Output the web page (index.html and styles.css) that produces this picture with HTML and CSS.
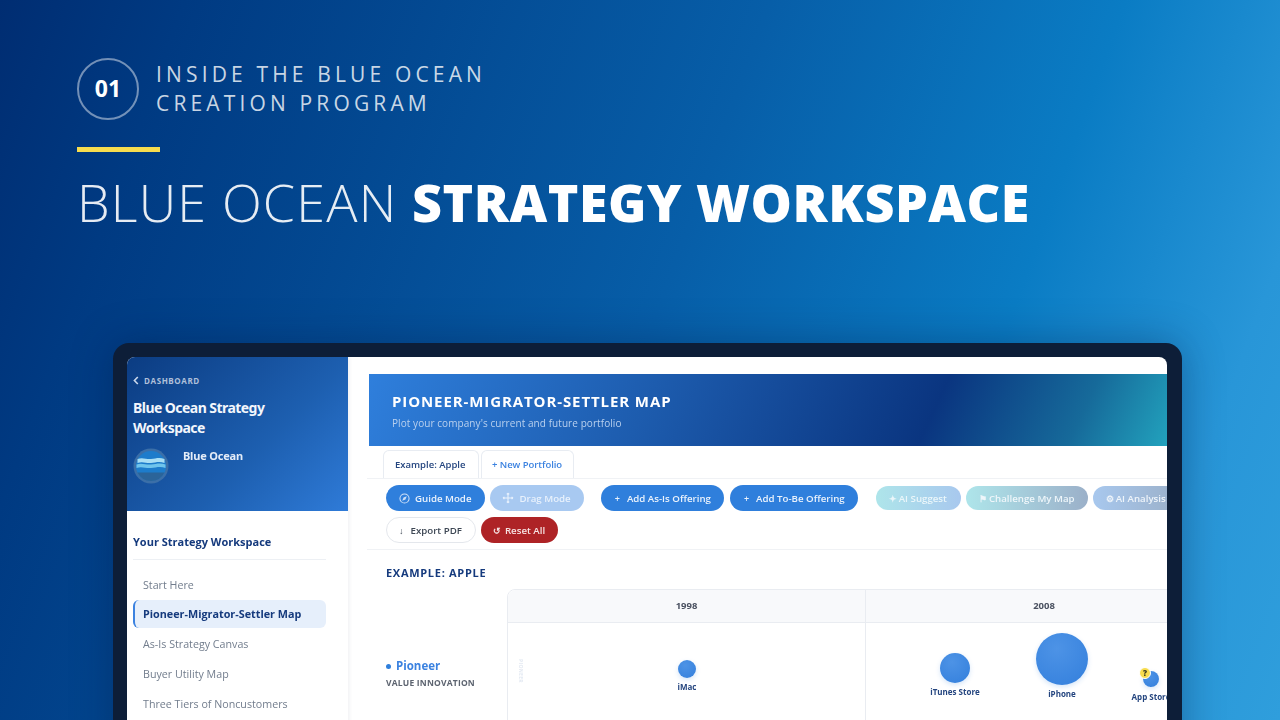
FILE: index.html
```html
<!DOCTYPE html>
<html lang="en">
    <head>
        <meta charset="UTF-8">
        <title>Blue Ocean Strategy Workspace</title>
        <link rel="stylesheet" href="styles.css">
    </head>
    <body>
        <div class="slide">
            <div class="kicker">
                <div class="kicker-num">01</div>
                <div class="kicker-text">INSIDE THE BLUE OCEAN<br>CREATION PROGRAM</div>
            </div>
            <div class="accent"></div>
            <h1 class="headline">BLUE OCEAN <b>STRATEGY WORKSPACE</b></h1>

            <div class="device">
                <div class="app">
                    <div class="sidebar">
                        <div class="side-head">
                            <div class="back">
                                <svg width="6" height="9" viewBox="0 0 6 9"><path d="M4.800 1 1.400 4.500l3.400 3.500" fill="none" stroke="#c9d6ea" stroke-width="1.600"/></svg>
                                DASHBOARD
                            </div>
                            <div class="side-title">Blue Ocean Strategy<br>Workspace</div>
                            <div class="brand">
                                <svg class="brand-logo" width="36" height="36" viewBox="0 0 36 36">
                                    <circle cx="18" cy="18" r="17.500" fill="#3b6fa8"/>
                                    <circle cx="18" cy="18" r="15" fill="#1d7ccb"/>
                                    <path d="M4.500 24.500h27a15 15 0 0 1-27 0z" fill="#2b6499"/>
                                    <path d="M4.500 11c5-2 9 .5 13.500 0s8.500-2 13.500 0v4c-5-2-9-.5-13.500 0s-8.500-2-13.500 0z" fill="#a8def4"/>
                                    <path d="M3.500 16.500c5-2 9.500.5 14.500 0s9.500-2 14.500 0v3.500c-5-2-9.500-.5-14.500 0s-9.500-2-14.500 0z" fill="#6fc4ec"/>
                                </svg>
                                <div class="brand-name">Blue Ocean</div>
                            </div>
                        </div>
                        <div class="side-nav">
                            <div class="nav-title">Your Strategy Workspace</div>
                            <div class="nav-item">Start Here</div>
                            <div class="nav-item nav-active">Pioneer-Migrator-Settler Map</div>
                            <div class="nav-item">As-Is Strategy Canvas</div>
                            <div class="nav-item">Buyer Utility Map</div>
                            <div class="nav-item">Three Tiers of Noncustomers</div>
                        </div>
                    </div>
                    <div class="main">
                        <div class="hero">
                            <div class="hero-title">PIONEER-MIGRATOR-SETTLER MAP</div>
                            <div class="hero-sub">Plot your company's current and future portfolio</div>
                        </div>
                        <div class="tabs">
                            <div class="tab tab-on">Example: Apple</div>
                            <div class="tab tab-new">+ New Portfolio</div>
                        </div>
                        <div class="toolbar">
                            <div class="tool-row">
                                <div class="btn btn-blue">
                                    <svg width="11" height="11" viewBox="0 0 12 12"><circle cx="6" cy="6" r="5" fill="none" stroke="#cfe0f7" stroke-width="1.100"/><path d="M8.500 3.500 7 7 3.500 8.500 5 5z" fill="#cfe0f7"/></svg>
                                    Guide Mode
                                </div>
                                <div class="btn btn-pale">
                                    <svg width="12" height="12" viewBox="0 0 12 12"><path d="M6 1v10M1 6h10M6 1 4.800 2.400M6 1l1.200 1.400M6 11 4.800 9.600M6 11l1.200-1.400M1 6l1.400-1.200M1 6l1.400 1.200M11 6 9.600 4.800M11 6 9.600 7.200" fill="none" stroke="#e8f1fc" stroke-width="1.100"/></svg>
                                    Drag Mode
                                </div>
                                <div class="tool-sep"></div>
                                <div class="btn btn-blue btn-add"><span class="btn-mark">+</span>Add As-Is Offering</div>
                                <div class="btn btn-blue btn-add"><span class="btn-mark">+</span>Add To-Be Offering</div>
                                <div class="tool-sep"></div>
                                <div class="btn btn-ai btn-ai-1"><span class="btn-mark">✦</span>AI Suggest</div>
                                <div class="btn btn-ai btn-ai-2"><span class="btn-mark">⚑</span>Challenge My Map</div>
                                <div class="btn btn-ai btn-ai-3"><span class="btn-mark">⚙</span>AI Analysis</div>
                            </div>
                            <div class="tool-row">
                                <div class="btn btn-line"><span class="btn-mark">↓</span>Export PDF</div>
                                <div class="btn btn-red"><span class="btn-mark">↺</span>Reset All</div>
                            </div>
                        </div>
                        <div class="content">
                            <div class="example-title">EXAMPLE: APPLE</div>
                            <div class="map">
                                <div class="map-labels">
                                    <div class="pioneer"><span class="pioneer-dot"></span>Pioneer</div>
                                    <div class="pioneer-sub">VALUE INNOVATION</div>
                                </div>
                                <div class="map-grid">
                                    <div class="map-head">1998</div>
                                    <div class="map-head map-col2">2008</div>
                                    <div class="map-cell">
                                        <div class="row-tag">PIONEER</div>
                                        <div class="bubble-wrap" style="left: 179px; top: 37px;">
                                            <div class="bubble" style="width: 18px; height: 18px;"></div>
                                            <div class="bubble-name">iMac</div>
                                        </div>
                                    </div>
                                    <div class="map-cell map-col2">
                                        <div class="bubble-wrap" style="left: 89px; top: 30px;">
                                            <div class="bubble" style="width: 30px; height: 30px;"></div>
                                            <div class="bubble-name">iTunes Store</div>
                                        </div>
                                        <div class="bubble-wrap" style="left: 196px; top: 10px;">
                                            <div class="bubble" style="width: 52px; height: 52px;"></div>
                                            <div class="bubble-name">iPhone</div>
                                        </div>
                                        <div class="bubble-wrap" style="left: 285px; top: 48px;">
                                            <div class="bubble" style="width: 16px; height: 16px;"><span class="bubble-q">?</span></div>
                                            <div class="bubble-name bubble-name-low">App Store</div>
                                        </div>
                                    </div>
                                </div>
                            </div>
                        </div>
                    </div>
                </div>
            </div>
        </div>
    </body>
</html>
```

FILE: styles.css
```css
* {
    box-sizing: border-box;
}
body {
    margin: 0;
    padding: 0;
    width: 1280px;
    height: 720px;
    overflow: hidden;
    font-family: "Open Sans", "Liberation Sans", sans-serif;
}
.slide {
    width: 1280px;
    height: 720px;
    overflow: hidden;
    padding: 58px 0 0 77px;
    background: linear-gradient(110deg, #002d72 0%, #003a82 12%, #075ea8 50%, #0a7cc4 73%, #2896d8 89%, #2f9edc 100%);
}

/* top heading */
.kicker {
    display: flex;
    align-items: center;
    gap: 17px;
}
.kicker-num {
    width: 62px;
    height: 62px;
    padding-bottom: 2px;
    border: 2px solid rgba(255, 255, 255, 0.45);
    border-radius: 50%;
    display: flex;
    align-items: center;
    justify-content: center;
    color: #fff;
    font-size: 23px;
    font-weight: 700;
}
.kicker-text {
    color: rgba(255, 255, 255, 0.8);
    font-size: 21px;
    font-weight: 500;
    line-height: 29px;
    letter-spacing: 4.150px;
}
.accent {
    width: 83px;
    height: 5px;
    margin-top: 27px;
    background: #f7dc4e;
}
.headline {
    margin: 15px 0 0 0;
    color: rgba(255, 255, 255, 0.9);
    font-size: 52px;
    font-weight: 350;
    line-height: 70px;
    letter-spacing: 1.200px;
    white-space: nowrap;
}
.headline b {
    color: #fff;
    font-weight: 800;
    letter-spacing: 0.500px;
}

/* laptop frame */
.device {
    width: 1069px;
    height: 500px;
    margin: 106px 0 0 36px;
    padding: 14px 15px 0 14px;
    background: #0d1e38;
    border-radius: 16px 16px 0 0;
    box-shadow: 0 0 40px rgba(0, 20, 60, 0.35);
}
.app {
    display: flex;
    height: 100%;
    background: #fff;
    border-radius: 8px 8px 0 0;
    overflow: hidden;
    filter: blur(0.35px);
}

/* sidebar */
.sidebar {
    width: 221px;
    flex-shrink: 0;
    box-shadow: 1px 0 4px rgba(20, 40, 80, 0.08);
}
.side-head {
    height: 154px;
    padding: 18px 6px 0 6px;
    background: linear-gradient(135deg, #0b3c82 0%, #1d5fb0 60%, #2f7bd8 100%);
}
.back {
    display: flex;
    align-items: center;
    gap: 5px;
    color: #b0c0da;
    font-size: 8px;
    font-weight: 700;
    letter-spacing: 0.600px;
    line-height: 11px;
}
.side-title {
    margin-top: 12px;
    color: #f2f6fc;
    font-family: "Noto Sans", sans-serif;
    font-size: 14px;
    font-weight: 700;
    line-height: 20px;
    letter-spacing: -0.550px;
}
.brand {
    display: flex;
    gap: 14px;
    margin-top: 10px;
}
.brand-logo {
    flex-shrink: 0;
}
.brand-name {
    color: #e4ecf8;
    font-family: "Noto Sans", sans-serif;
    font-size: 11px;
    font-weight: 700;
    line-height: 14px;
    margin-top: 1px;
    letter-spacing: -0.200px;
}
.side-nav {
    padding: 23px 22px 0 6px;
}
.nav-title {
    height: 26px;
    color: #153a7d;
    font-size: 11px;
    font-weight: 700;
    line-height: 15px;
    border-bottom: 1px solid #edf0f4;
    margin-bottom: 10px;
}
.nav-item {
    height: 28px;
    margin-bottom: 2px;
    padding-left: 10px;
    color: #727d8d;
    font-size: 10.700px;
    line-height: 30px;
}
.nav-active {
    margin-bottom: 1px;
    padding-left: 8px;
    border-left: 2px solid #3b82e0;
    border-radius: 6px;
    background: #e6effb;
    color: #153a7d;
    font-size: 10.800px;
    font-weight: 700;
    line-height: 28px;
}

/* main column */
.main {
    flex: 1;
    min-width: 0;
    padding-top: 17px;
    overflow: hidden;
}
.hero {
    height: 72px;
    margin-left: 21px;
    padding: 17px 0 0 23px;
    background: linear-gradient(115deg, #2f7fdc 0%, #1d5cae 35%, #0a3580 70%, #166a9a 88%, #22a2bd 100%);
}
.hero-title {
    color: #fff;
    font-size: 15px;
    font-weight: 700;
    line-height: 20px;
    letter-spacing: 0.900px;
}
.hero-sub {
    margin-top: 5px;
    color: #b9d0ee;
    font-size: 10px;
    line-height: 15px;
    letter-spacing: 0.070px;
}
.tabs {
    display: flex;
    gap: 2px;
    height: 28px;
    margin: 4px 0 0 35px;
}
.tab {
    height: 28px;
    padding: 0 12px 0 11px;
    width: 96px;
    border: 1px solid #e8ecf2;
    border-bottom: none;
    border-radius: 6px 6px 0 0;
    font-size: 9.500px;
    line-height: 27px;
}
.tab-on {
    color: #24457f;
    font-weight: 600;
}
.tab-new {
    width: 93px;
    padding: 0 10px;
    color: #3b82e0;
    font-weight: 600;
    letter-spacing: -0.050px;
}
.toolbar {
    height: 72px;
    margin-left: 19px;
    padding: 6px 0 0 19px;
    border-top: 1px solid #f0f2f5;
    border-bottom: 1px solid #f0f2f5;
}
.tool-row {
    display: flex;
    align-items: center;
    gap: 5px;
    height: 26px;
    margin-bottom: 6px;
    white-space: nowrap;
}
.tool-sep {
    width: 1px;
    height: 20px;
    margin: 0 4px 0 3px;
    background: #edf0f4;
}
.btn {
    display: flex;
    align-items: center;
    flex-shrink: 0;
    height: 26px;
    padding: 0 14px 0 13px;
    border-radius: 13px;
    font-size: 9.700px;
    font-weight: 600;
    color: #fff;
    gap: 5px;
}
.btn-mark {
    font-size: 9px;
    margin-right: 2px;
}
.btn-blue {
    background: #2f7fdc;
    color: #eaf2fc;
}
.btn-pale {
    padding: 0 13px 0 12px;
    background: #a8c9f1;
    color: #e8f1fc;
}
.btn-add {
    padding: 0 13px 0 14px;
}
.btn-add + .btn-add {
    margin-left: 1px;
}
.btn-add .btn-mark {
    margin-right: 2px;
}
.btn-ai {
    height: 24px;
    padding: 0 13px 0 13px;
    gap: 0;
}
.btn-ai-1 {
    margin-left: 1px;
    padding-right: 14px;
    background: linear-gradient(90deg, #aee5ea, #a8c8ee);
    color: #eaf6fa;
}
.btn-ai-2 {
    background: linear-gradient(90deg, #aee5ea, #9bb0c9);
    color: #eef6fa;
}
.btn-ai-3 {
    background: linear-gradient(90deg, #a8c8ee, #9bb0c9);
    color: #eef4fa;
}
.btn-line {
    padding: 0 13px 0 12px;
    background: #fff;
    border: 1px solid #e4e7ec;
    color: #3c4653;
}
.btn-red {
    padding: 0 13px 0 12px;
    gap: 3px;
    background: #ae2326;
    color: #f6e3e3;
}
.btn-red .btn-mark {
    margin-right: 1px;
}

/* example map */
.content {
    padding: 15px 0 0 38px;
}
.example-title {
    color: #153a7d;
    font-size: 11px;
    font-weight: 700;
    line-height: 16px;
    letter-spacing: 0.700px;
}
.map {
    display: flex;
    margin-top: 8px;
}
.map-labels {
    width: 122px;
    flex-shrink: 0;
    padding-top: 69px;
}
.pioneer {
    display: flex;
    align-items: center;
    color: #3b82e0;
    font-size: 11.500px;
    font-weight: 700;
    line-height: 16px;
}
.pioneer-dot {
    width: 5px;
    height: 5px;
    margin-right: 5px;
    border-radius: 50%;
    background: #2f7fdc;
}
.pioneer-sub {
    margin-top: 2px;
    color: #5d6470;
    font-size: 8.500px;
    font-weight: 700;
    line-height: 13px;
    letter-spacing: 0.200px;
}
.map-grid {
    display: grid;
    grid-template-columns: 357px 357px;
    grid-template-rows: 33px 200px;
    flex-shrink: 0;
    border: 1px solid #e9ecf1;
    border-radius: 8px 0 0 0;
    margin-left: -1px;
}
.map-head {
    background: #f8f9fb;
    border-bottom: 1px solid #e9ecf1;
    color: #4a5160;
    font-size: 9.500px;
    font-weight: 700;
    line-height: 32px;
    text-align: center;
    border-radius: 8px 0 0 0;
}
.map-col2 {
    border-left: 1px solid #e9ecf1;
    border-radius: 0;
}
.map-cell {
    position: relative;
}
.row-tag {
    position: absolute;
    left: 10px;
    top: 36px;
    color: #e3e9f2;
    font-size: 5px;
    font-weight: 700;
    letter-spacing: 0.300px;
    writing-mode: vertical-rl;
}
.bubble-wrap {
    position: absolute;
    display: flex;
    flex-direction: column;
    align-items: center;
    width: 0;
}
.bubble {
    position: relative;
    flex-shrink: 0;
    border-radius: 50%;
    background: radial-gradient(circle at 40% 30%, #4d93e6, #337fdc);
    box-shadow: 0 2px 5px rgba(47, 127, 220, 0.2);
}
.bubble-q {
    position: absolute;
    left: -4px;
    top: -4px;
    width: 12px;
    height: 12px;
    border: 1px solid #fff;
    border-radius: 50%;
    background: #f7dc4e;
    color: #3a3a1e;
    font-size: 8px;
    font-weight: 800;
    line-height: 10px;
    text-align: center;
}
.bubble-name {
    margin-top: 3px;
    color: #24457f;
    font-size: 8px;
    font-weight: 700;
    line-height: 11px;
    white-space: nowrap;
}
.bubble-name-low {
    margin-top: 4px;
}
```
